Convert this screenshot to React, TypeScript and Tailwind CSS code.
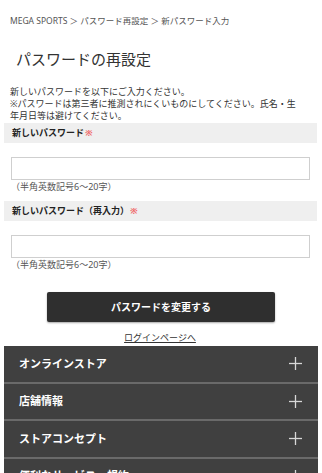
import React from "react";

const font = { fontFamily: '"Noto Sans", "Noto Sans CJK JP", sans-serif' };

function Field({ label, note }: { label: string; note?: string }) {
  return (
    <div>
      <div className="flex h-[20px] items-center bg-[#efefef] pl-[8px] text-[9px] font-bold text-[#222]">
        {label}
        <span className="ml-[1px] text-[#f06a6a]">※</span>
      </div>
      <div className="px-[7px] pt-[14px]">
        <input
          type="password"
          className="block h-[23px] w-full border border-[#cfcfcf] bg-white outline-none"
        />
        <p className="mt-[1px] text-[9px] leading-[12px] text-[#555]">{note}</p>
      </div>
    </div>
  );
}

function FooterRow({ title }: { title: string }) {
  return (
    <div className="flex h-[37.5px] items-center justify-between border-b-2 border-[#6a6a6a] pl-[15px] pr-[16px]">
      <span className="text-[11px] font-bold text-white">{title}</span>
      <svg width="13" height="13" viewBox="0 0 13 13" className="text-[#d8d8d8]">
        <line x1="6.5" y1="0" x2="6.5" y2="13" stroke="currentColor" strokeWidth="1.3" />
        <line x1="0" y1="6.5" x2="13" y2="6.5" stroke="currentColor" strokeWidth="1.3" />
      </svg>
    </div>
  );
}

export default function App() {
  return (
    <div className="min-h-[473px] w-[322px] overflow-hidden bg-white px-[4px] text-[#333]" style={font}>
      <div className="pl-[6px] pt-[15px] text-[8.5px] leading-[12px] text-[#555]">
        MEGA SPORTS ＞ パスワード再設定 ＞ 新パスワード入力
      </div>
      <h1 className="pl-[12px] pt-[21px] text-[15px] leading-[22px] text-[#333]">パスワードの再設定</h1>
      <p className="pl-[6px] pt-[16px] text-[9px] leading-[12px] text-[#333]">
        新しいパスワードを以下にご入力ください。
        <br />
        ※パスワードは第三者に推測されにくいものにしてください。氏名・生
        <br />
        年月日等は避けてください。
      </p>
      <div className="mr-[1px] mt-[1px] flex flex-col gap-[8px]">
        <Field label="新しいパスワード" note="（半角英数記号6〜20字）" />
        <Field label="新しいパスワード（再入力）" note="（半角英数記号6〜20字）" />
      </div>
      <div className="flex justify-center pt-[21px]">
        <button
          type="button"
          className="h-[30px] w-[228px] rounded-[2px] bg-[#2f2f2f] text-[10px] font-bold text-white shadow-[0_1px_2px_rgba(0,0,0,0.35)]"
        >
          パスワードを変更する
        </button>
      </div>
      <div className="flex justify-center pt-[10px]">
        <a href="#" className="ml-[-2px] text-[9px] leading-[12px] text-[#333] underline">
          ログインページへ
        </a>
      </div>
      <div className="mt-[2px] bg-[#404040]">
        <FooterRow title="オンラインストア" />
        <FooterRow title="店舗情報" />
        <FooterRow title="ストアコンセプト" />
        <FooterRow title="便利なサービス・規約" />
      </div>
    </div>
  );
}
